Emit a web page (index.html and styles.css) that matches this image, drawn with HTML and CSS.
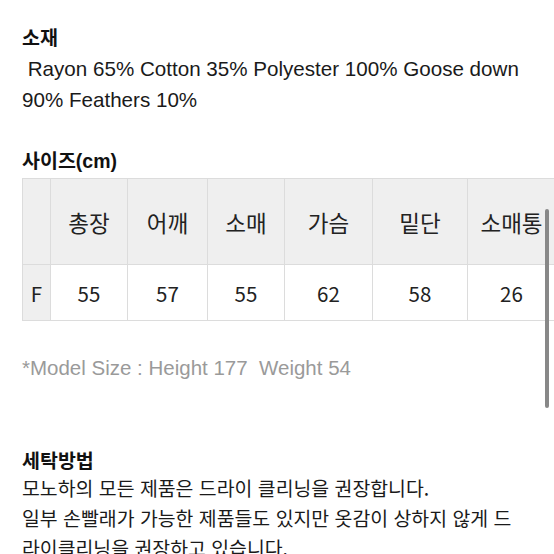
FILE: index.html
```html
<!DOCTYPE html>
<html lang="ko">
<head>
<meta charset="utf-8">
<link rel="stylesheet" href="styles.css">
</head>
<body>
<div class="page">
  <h2 class="heading first">소재</h2>
  <p class="latin">&nbsp;Rayon 65% Cotton 35% Polyester 100% Goose down 90% Feathers 10%</p>

  <h2 class="heading size">사이즈(cm)</h2>
  <table class="sizes">
    <colgroup>
      <col class="c0"><col class="c1"><col class="c2"><col class="c3"><col class="c4"><col class="c5"><col class="c6">
    </colgroup>
    <tr class="head">
      <td class="label"></td><td>총장</td><td>어깨</td><td>소매</td><td>가슴</td><td>밑단</td><td>소매통</td>
    </tr>
    <tr class="data">
      <td class="label">F</td><td>55</td><td>57</td><td>55</td><td>62</td><td>58</td><td>26</td>
    </tr>
  </table>

  <p class="model">*Model Size : Height 177&nbsp; Weight 54</p>

  <h2 class="heading wash">세탁방법</h2>
  <p class="korean">모노하의 모든 제품은 드라이 클리닝을 권장합니다.<br>일부 손빨래가 가능한 제품들도 있지만 옷감이 상하지 않게 드라이클리닝을 권장하고 있습니다.</p>
</div>
<div class="scrollbar"></div>
</body>
</html>
```
FILE: styles.css
```css
html, body {
  margin: 0;
  padding: 0;
  background: #fff;
  overflow: hidden;
}
body {
  width: 554px;
  height: 554px;
  position: relative;
  color: #1a1a1a;
}
.page {
  padding: 26px 0 0 22px;
}
.heading {
  margin: 0;
  font-family: "Liberation Sans", "Noto Sans CJK KR", sans-serif;
  font-weight: bold;
  font-size: 19.5px;
  line-height: 24px;
  color: #111;
}
.latin {
  margin: 3px 0 0 0;
  width: 526px;
  font-family: "Liberation Sans", "Noto Sans CJK KR", sans-serif;
  font-size: 20.6px;
  line-height: 31px;
}
.heading.size {
  margin-top: 34px;
}
.sizes {
  margin-top: 5px;
  border-collapse: collapse;
  table-layout: fixed;
  width: 533px;
  font-family: "Noto Sans CJK KR", sans-serif;
  font-size: 20.5px;
  color: #222;
}
.c0 { width: 28px; }
.c1 { width: 77px; }
.c2 { width: 80px; }
.c3 { width: 77px; }
.c4 { width: 88px; }
.c5 { width: 95px; }
.c6 { width: 88px; }
.sizes td {
  border: 1.5px solid #dcdcdc;
  text-align: center;
  padding: 0;
}
.sizes .head td {
  background: #efefef;
  height: 85px;
  font-size: 22.5px;
}
.sizes .data td {
  background: #fff;
  height: 55px;
}
.sizes .data td.label {
  background: #efefef;
}
.model {
  margin: 35px 0 0 0;
  font-family: "Liberation Sans", sans-serif;
  font-size: 20.5px;
  line-height: 24px;
  color: #9a9a9a;
}
.heading.wash {
  margin-top: 69px;
}
.korean {
  margin: 0;
  width: 500px;
  font-family: "Noto Sans CJK KR", sans-serif;
  font-size: 19.4px;
  line-height: 30px;
  color: #1a1a1a;
}
.scrollbar {
  position: absolute;
  left: 545px;
  top: 209px;
  width: 4px;
  height: 199px;
  border-radius: 2px;
  background: #888;
}
```
